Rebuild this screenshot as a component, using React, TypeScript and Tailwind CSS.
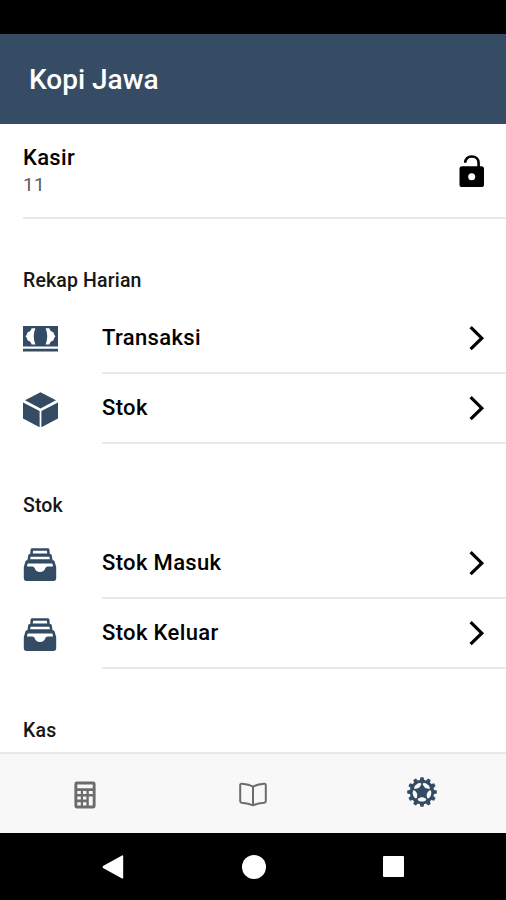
import React from 'react'

const CashIcon = () => (
    <svg className="h-[26px] w-[35px]" viewBox="0 0 35 26" fill="currentColor">
        <path
            fillRule="evenodd"
            d="M0 0H35V20.6H0ZM8.6 2.2C8.2 4.2 6.8 5.6 4.6 6.2C4.3 7.8 3.6 9.2 2.6 10.3C3.6 11.4 4.3 12.8 4.6 14.4C6.8 15 8.2 16.4 8.6 18.4H12.4C10.2 13.5 10.2 7.1 12.4 2.2ZM26.4 2.2C26.8 4.2 28.2 5.6 30.4 6.2C30.7 7.8 31.4 9.2 32.4 10.3C31.4 11.4 30.7 12.8 30.4 14.4C28.2 15 26.8 16.4 26.4 18.4H22.6C24.8 13.5 24.8 7.1 22.6 2.2Z"
        />
        <path d="M0 22.8H35V25.6H0Z" />
    </svg>
)

const CubeIcon = () => (
    <svg className="mt-0.5 h-[36px] w-[35px]" viewBox="0 0 35 36" fill="currentColor">
        <path d="M17.5 0.2L33 8.2L17.5 16.4L2 8.2Z" />
        <path d="M0 10.4L16.6 19V35.2L0 26.4Z" />
        <path d="M35 10.4L18.4 19V35.2L35 26.4Z" />
    </svg>
)

const FilingIcon = () => (
    <svg className="mt-0.5 h-[34px] w-[34px]" viewBox="0 0 34 34" fill="currentColor">
        <path
            fillRule="evenodd"
            d="M9.2 0.2H24.8Q26.2 0.2 26.4 1.6L26.8 6H27.2Q28.6 6 28.8 7.4L29.6 12.3H30.2Q31.4 12.4 31.6 13.6L33.2 19V30.6Q33.2 33 30.8 33H3.2Q0.8 33 0.8 30.6V19L2.4 13.6Q2.6 12.4 3.8 12.3H4.4L5.2 7.4Q5.4 6 6.8 6H7.2L7.6 1.6Q7.8 0.2 9.2 0.2ZM10.1 2.8L9.8 5.4H24.2L23.9 2.8ZM7.6 8.7L7.1 11.3H26.9L26.4 8.7ZM4.6 15.4L4 18.4H9.4Q11 18.4 11.6 20C12.4 22.4 14.2 24 17 24C19.8 24 21.6 22.4 22.4 20Q23 18.4 24.6 18.4H30L29.4 15.4Z"
        />
    </svg>
)

const UnlockIcon = () => (
    <svg className="h-[32px] w-[26px]" viewBox="0 0 26 32">
        <path d="M6.2 7.8C6.2 4 8.8 1.5 12.7 1.5C16.8 1.5 19.6 4 19.6 8V13" fill="none" stroke="currentColor" strokeWidth="2.6" />
        <path
            fill="currentColor"
            fillRule="evenodd"
            d="M3.1 11.3H22.4Q25 11.3 25 13.9V29.4Q25 32 22.4 32H3.1Q0.5 32 0.5 29.4V13.9Q0.5 11.3 3.1 11.3ZM12.7 18.2A3.5 3.5 0 1 0 12.7 25.2A3.5 3.5 0 1 0 12.7 18.2Z"
        />
    </svg>
)

const ChevronIcon = () => (
    <svg className="h-[26px] w-[16px]" viewBox="0 0 16 26" fill="none" stroke="#000" strokeWidth="3.2">
        <path d="M1.6 2.2L12.8 13.2L1.6 24.2" />
    </svg>
)

const CalculatorIcon = () => (
    <svg className="h-[28px] w-[22px]" viewBox="0 0 22 28" fill="currentColor">
        <path
            fillRule="evenodd"
            d="M2.8 0.5H19.2Q21.6 0.5 21.6 2.9V25.1Q21.6 27.5 19.2 27.5H2.8Q0.4 27.5 0.4 25.1V2.9Q0.4 0.5 2.8 0.5ZM3.3 3.4V7.2H18.7V3.4ZM3.3 9.9V12.9H6.8V9.9ZM9 9.9V12.9H12.4V9.9ZM14.8 9.9V12.9H18.7V9.9ZM3.3 15.4V18.6H6.8V15.4ZM9 15.4V18.6H12.4V15.4ZM3.3 21.2V24.4H6.8V21.2ZM9 21.2V24.4H12.4V21.2ZM14.8 15.4V24.4H18.7V15.4Z"
        />
    </svg>
)

const BookIcon = () => (
    <svg className="h-[25px] w-[28px]" viewBox="0 0 28 25" fill="none" stroke="currentColor" strokeWidth="2" strokeLinejoin="round">
        <path d="M14 4.6C11 3 7 2.2 3 1.8Q1.2 1.6 1.2 3.4V19Q1.2 20.6 2.8 20.8C7 21.2 11 22 14 23.3C17 22 21 21.2 25.2 20.8Q26.8 20.6 26.8 19V3.4Q26.8 1.6 25 1.8C21 2.2 17 3 14 4.6Z" />
        <path d="M14 4.6V23.3" />
    </svg>
)

const teeth = [0, 30, 60, 90, 120, 150, 180, 210, 240, 270, 300, 330]
const holes = [36, 108, 180, 252, 324]

const SettingsIcon = () => (
    <svg className="h-[30px] w-[30px]" viewBox="-15 -15 30 30" fill="currentColor">
        {teeth.map((angle) => (
            <path key={angle} transform={`rotate(${angle})`} d="M-2.3 -11.5L-1.5 -14.8H1.5L2.3 -11.5Z" />
        ))}
        <circle r="12.2" />
        {holes.map((angle) => (
            <path
                key={angle}
                transform={`rotate(${angle})`}
                fill="#f8f8f8"
                d="M-4.1 -7.9C-3.2 -8.9 -1.7 -9.4 0 -9.4C1.7 -9.4 3.2 -8.9 4.1 -7.9C4.5 -7.2 4 -6.6 3.2 -6.2L1 -5.3Q0 -5 -1 -5.3L-3.2 -6.2C-4 -6.6 -4.5 -7.2 -4.1 -7.9Z"
            />
        ))}
    </svg>
)

const Row = ({ icon, label }: { icon: React.ReactNode; label: string }) => (
    <div className="flex h-[70px] pl-[23px] text-[#344b64]">
        <div className="flex w-[79px] items-center">{icon}</div>
        <div className="flex flex-1 items-center justify-between border-b-2 border-[#e9e9e9] pr-[21px]">
            <span className="pb-px text-[22px] font-medium tracking-[0.35px] text-black">{label}</span>
            <ChevronIcon />
        </div>
    </div>
)

const SectionTitle = ({ children }: { children: React.ReactNode }) => (
    <h2 className="h-[85px] pt-12 pl-[23px] text-[19.5px] leading-[28px] font-medium tracking-[0.15px] text-[#161616]">{children}</h2>
)

const App = () => {
    return (
        <div className="flex h-[900px] w-[506px] flex-col overflow-hidden bg-white font-['Roboto',sans-serif] text-black">
            <div className="h-[34px] shrink-0 bg-black" />
            <header className="flex h-[90px] shrink-0 items-center bg-[#364c64] pt-0.5 pl-[29px]">
                <h1 className="text-[28px] font-medium text-white">Kopi Jawa</h1>
            </header>

            <main className="h-[628px] shrink-0 overflow-hidden">
                <div className="h-[95px] pl-[23px]">
                    <div className="flex h-full items-center justify-between border-b-2 border-[#e9e9e9] pr-[21px]">
                        <div>
                            <p className="text-[22px] leading-[28px] font-medium tracking-[0.3px]">Kasir</p>
                            <p className="text-[19px] leading-[26px] tracking-[0.3px] text-[#5c5c5c]">11</p>
                        </div>
                        <UnlockIcon />
                    </div>
                </div>

                <SectionTitle>Rekap Harian</SectionTitle>
                <Row icon={<CashIcon />} label="Transaksi" />
                <Row icon={<CubeIcon />} label="Stok" />

                <SectionTitle>Stok</SectionTitle>
                <Row icon={<FilingIcon />} label="Stok Masuk" />
                <Row icon={<FilingIcon />} label="Stok Keluar" />

                <SectionTitle>Kas</SectionTitle>
            </main>

            <nav className="grid h-[81px] shrink-0 grid-cols-3 place-items-center border-t-2 border-[#e9e9e9] bg-[#f8f8f8] pt-0.5 pl-px text-[#6c6c6c]">
                <CalculatorIcon />
                <BookIcon />
                <div className="pb-1.5 text-[#344b64]">
                    <SettingsIcon />
                </div>
            </nav>

            <div className="flex flex-1 items-center justify-between bg-black px-[102px] text-white">
                <svg className="h-[24px] w-[22px]" viewBox="0 0 22 24" fill="currentColor">
                    <path d="M20 0.4Q21.2 0 21.2 1.4V22.6Q21.2 24 20 23.4L1 13Q0 12 1 11Z" />
                </svg>
                <div className="size-6 rounded-full bg-white" />
                <div className="size-[21px] rounded-[1px] bg-white" />
            </div>
        </div>
    )
}

export default App
